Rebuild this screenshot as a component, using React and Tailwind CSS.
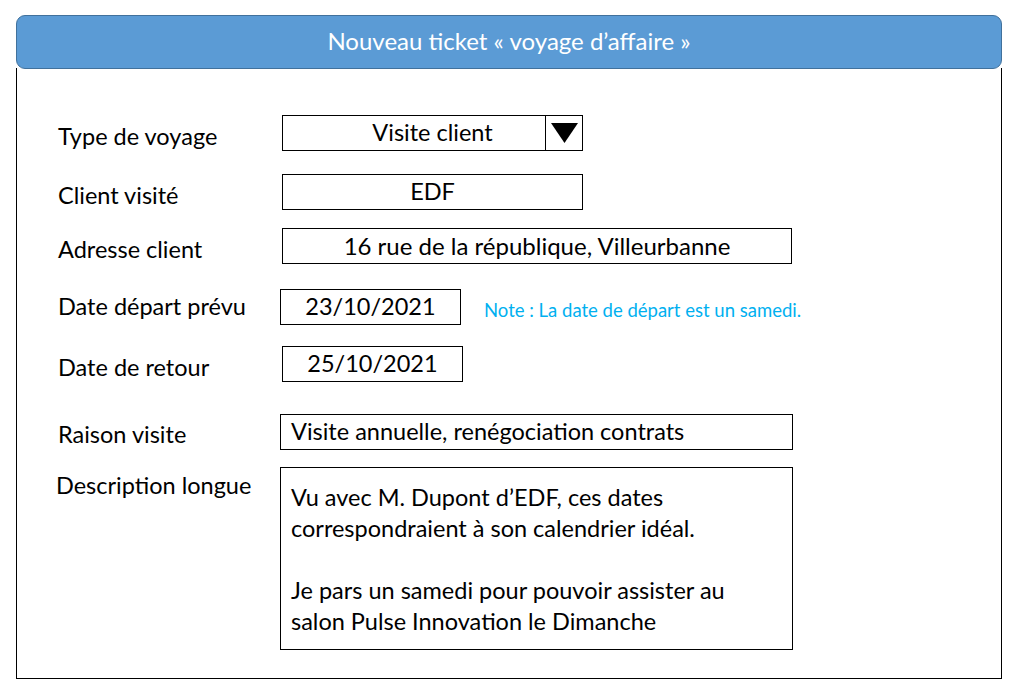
export default function App() {
  return (
    <div className="min-h-screen bg-white font-[Lato,sans-serif] text-black">
      <div className="ml-[16px] pt-[15px] w-[986px]">
        <div className="flex h-[54px] items-center justify-center rounded-[9px] border border-[#41719C] bg-[#5B9BD5] pb-[2px] text-[24px] text-white">
          Nouveau ticket « voyage d’affaire »
        </div>

        <div className="-mt-px h-[611px] border-x border-b border-black pl-[41px] pt-[47px]">
          {/* Type de voyage */}
          <div className="flex h-[36px]">
            <div className="w-[224px] pt-[3px] text-[23.5px] leading-[36px]">Type de voyage</div>
            <div className="flex h-[36px] w-[301px] border border-black">
              <div className="flex flex-1 items-center justify-center pl-[37px] text-[23.5px]">Visite client</div>
              <div className="flex w-[37px] items-center justify-center border-l border-black">
                <svg width="27" height="20" viewBox="0 0 27 20">
                  <polygon points="0,0 27,0 13.5,20" fill="black" />
                </svg>
              </div>
            </div>
          </div>

          {/* Client visité */}
          <div className="mt-[23px] flex h-[36px]">
            <div className="w-[224px] pt-[3px] text-[23.5px] leading-[36px]">Client visité</div>
            <div className="flex h-[36px] w-[301px] items-center justify-center border border-black text-[23.5px]">
              EDF
            </div>
          </div>

          {/* Adresse client */}
          <div className="mt-[18px] flex h-[36px]">
            <div className="w-[224px] pt-[3px] text-[23.5px] leading-[36px]">Adresse client</div>
            <div className="flex h-[36px] w-[510px] items-center justify-center border border-black text-[24px]">
              16 rue de la république, Villeurbanne
            </div>
          </div>

          {/* Date départ prévu */}
          <div className="mt-[25px] flex h-[36px]">
            <div className="w-[222px] text-[23.5px] leading-[34px]">Date départ prévu</div>
            <div className="flex h-[36px] w-[181px] items-center justify-center border border-black text-[23.5px]">
              23/10/2021
            </div>
            <div className="ml-[23px] pt-[3px] text-[18.5px] leading-[36px] text-[#00B0F0]">
              Note : La date de départ est un samedi.
            </div>
          </div>

          {/* Date de retour */}
          <div className="mt-[21px] flex h-[36px]">
            <div className="w-[224px] pt-[3px] text-[23.5px] leading-[36px]">Date de retour</div>
            <div className="flex h-[36px] w-[181px] items-center justify-center border border-black text-[23.5px]">
              25/10/2021
            </div>
          </div>

          {/* Raison visite */}
          <div className="mt-[32px] flex h-[36px]">
            <div className="w-[222px] pt-[2px] text-[23.5px] leading-[36px]">Raison visite</div>
            <div className="flex h-[36px] w-[513px] items-center border border-black pl-[10px] text-[23.5px]">
              Visite annuelle, renégociation contrats
            </div>
          </div>

          {/* Description longue */}
          <div className="mt-[17px] flex">
            <div className="-ml-[2px] w-[224px] pt-[4px] text-[23.5px] leading-[28px]">Description longue</div>
            <div className="h-[183px] w-[513px] border border-black pl-[10px] pt-[14px] text-[23.5px] leading-[31px]">
              <div>Vu avec M. Dupont d’EDF, ces dates</div>
              <div>correspondraient à son calendrier idéal.</div>
              <div className="h-[31px]" />
              <div>Je pars un samedi pour pouvoir assister au</div>
              <div>salon Pulse Innovation le Dimanche</div>
            </div>
          </div>
        </div>
      </div>
    </div>
  )
}
